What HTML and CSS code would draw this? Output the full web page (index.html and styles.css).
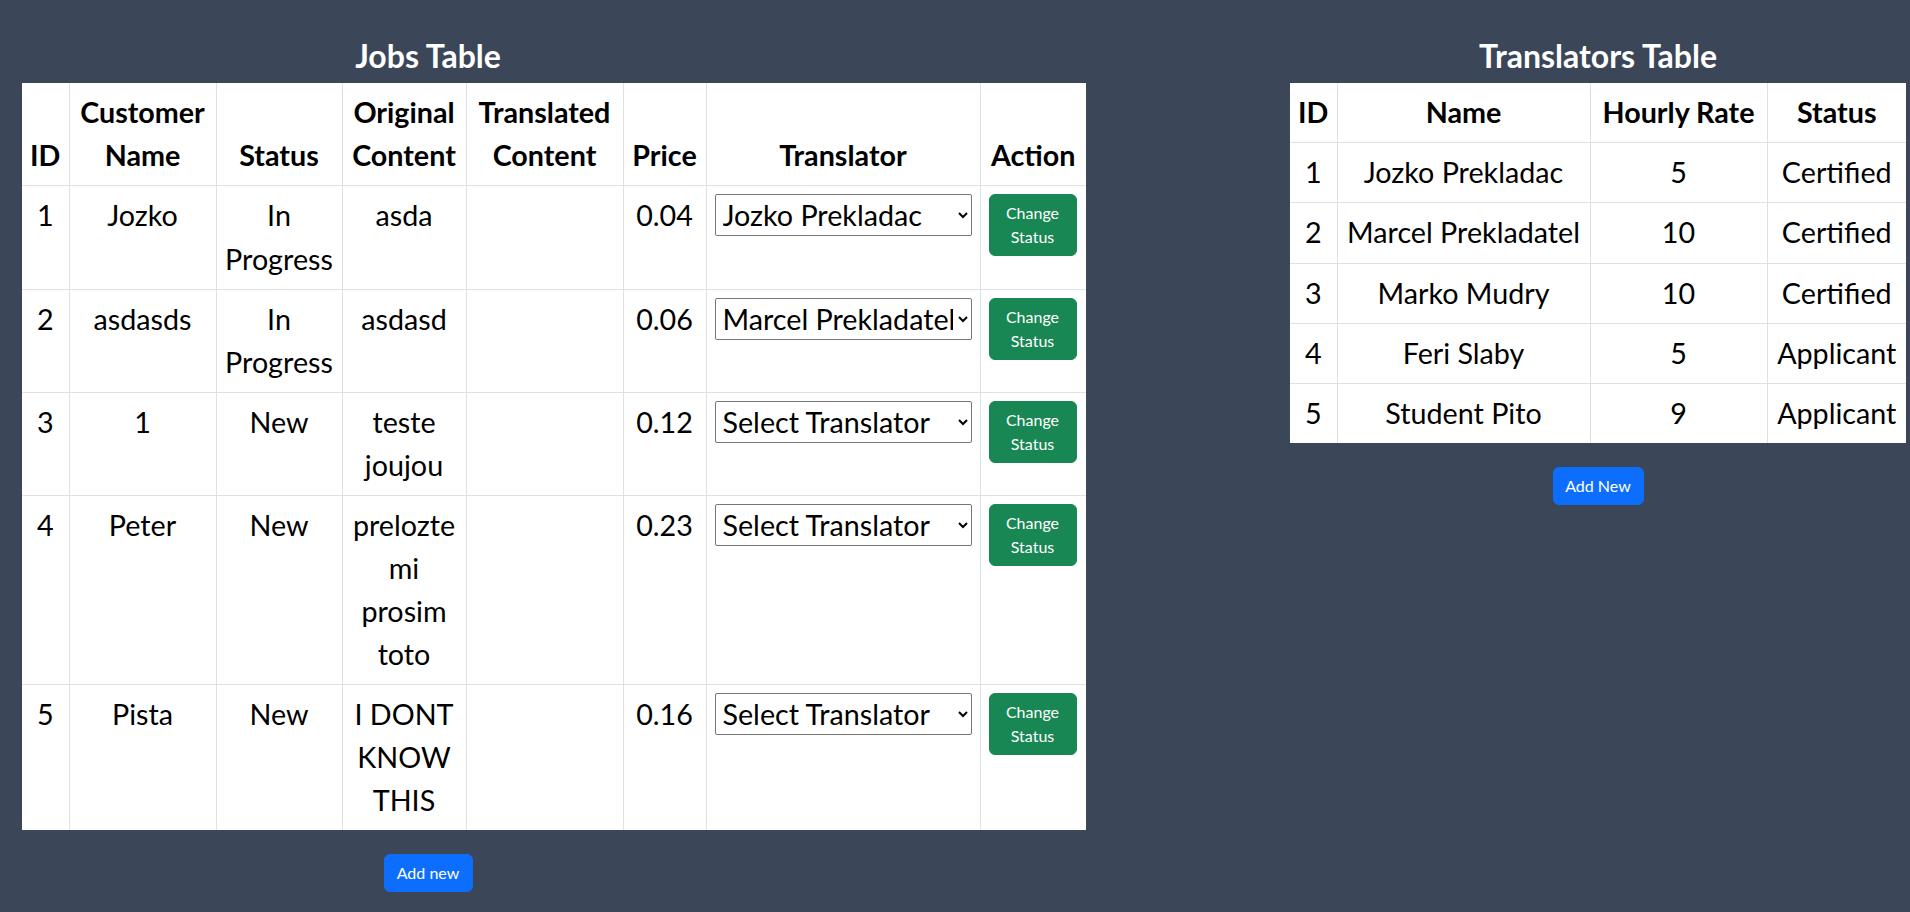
FILE: index.html
```html
<!DOCTYPE html>
<html lang="en">
<head>
<meta charset="utf-8">
<title>Jobs and Translators</title>
<link rel="stylesheet" href="styles.css">
</head>
<body>
<main class="page">
  <section class="panel panel-jobs">
    <h2 class="panel-title">Jobs Table</h2>
    <table class="data-table jobs-table">
      <colgroup>
        <col class="c-id"><col class="c-customer"><col class="c-status"><col class="c-original"><col class="c-translated"><col class="c-price"><col class="c-translator"><col class="c-action">
      </colgroup>
      <thead>
        <tr><th>ID</th><th>Customer Name</th><th>Status</th><th>Original Content</th><th>Translated Content</th><th>Price</th><th>Translator</th><th>Action</th></tr>
      </thead>
      <tbody>
        <tr>
          <td>1</td><td>Jozko</td><td>In Progress</td><td>asda</td><td></td><td>0.04</td>
          <td><select class="translator-select"><option>Select Translator</option><option selected>Jozko Prekladac</option><option>Marcel Prekladatel</option><option>Marko Mudry</option><option>Feri Slaby</option><option>Student Pito</option></select></td>
          <td><button class="btn btn-success">Change Status</button></td>
        </tr>
        <tr>
          <td>2</td><td>asdasds</td><td>In Progress</td><td>asdasd</td><td></td><td>0.06</td>
          <td><select class="translator-select"><option>Select Translator</option><option>Jozko Prekladac</option><option selected>Marcel Prekladatel</option><option>Marko Mudry</option><option>Feri Slaby</option><option>Student Pito</option></select></td>
          <td><button class="btn btn-success">Change Status</button></td>
        </tr>
        <tr>
          <td>3</td><td>1</td><td>New</td><td>teste joujou</td><td></td><td>0.12</td>
          <td><select class="translator-select"><option selected>Select Translator</option><option>Jozko Prekladac</option><option>Marcel Prekladatel</option><option>Marko Mudry</option><option>Feri Slaby</option><option>Student Pito</option></select></td>
          <td><button class="btn btn-success">Change Status</button></td>
        </tr>
        <tr>
          <td>4</td><td>Peter</td><td>New</td><td>prelozte mi prosim toto</td><td></td><td>0.23</td>
          <td><select class="translator-select"><option selected>Select Translator</option><option>Jozko Prekladac</option><option>Marcel Prekladatel</option><option>Marko Mudry</option><option>Feri Slaby</option><option>Student Pito</option></select></td>
          <td><button class="btn btn-success">Change Status</button></td>
        </tr>
        <tr>
          <td>5</td><td>Pista</td><td>New</td><td>I DONT KNOW THIS</td><td></td><td>0.16</td>
          <td><select class="translator-select"><option selected>Select Translator</option><option>Jozko Prekladac</option><option>Marcel Prekladatel</option><option>Marko Mudry</option><option>Feri Slaby</option><option>Student Pito</option></select></td>
          <td><button class="btn btn-success">Change Status</button></td>
        </tr>
      </tbody>
    </table>
    <button class="btn btn-primary add-btn">Add new</button>
  </section>

  <section class="panel panel-translators">
    <h2 class="panel-title">Translators Table</h2>
    <table class="data-table translators-table">
      <colgroup>
        <col class="t-id"><col class="t-name"><col class="t-rate"><col class="t-status">
      </colgroup>
      <thead>
        <tr><th>ID</th><th>Name</th><th>Hourly Rate</th><th>Status</th></tr>
      </thead>
      <tbody>
        <tr><td>1</td><td>Jozko Prekladac</td><td>5</td><td>Certified</td></tr>
        <tr><td>2</td><td>Marcel Prekladatel</td><td>10</td><td>Certified</td></tr>
        <tr><td>3</td><td>Marko Mudry</td><td>10</td><td>Certified</td></tr>
        <tr><td>4</td><td>Feri Slaby</td><td>5</td><td>Applicant</td></tr>
        <tr><td>5</td><td>Student Pito</td><td>9</td><td>Applicant</td></tr>
      </tbody>
    </table>
    <button class="btn btn-primary add-btn">Add New</button>
  </section>
</main>
</body>
</html>
```

FILE: styles.css
```css
* {
  box-sizing: border-box;
}

html, body {
  margin: 0;
  padding: 0;
}

body {
  background: #3b4659;
  font-family: Lato, "Liberation Sans", sans-serif;
  color: #000;
  min-height: 100vh;
}

.page {
  display: flex;
  justify-content: space-between;
  align-items: flex-start;
  padding: 37px 4px 0 22px;
}

.panel {
  display: flex;
  flex-direction: column;
  align-items: center;
}

.panel-jobs {
  width: 812px;
}

.panel-translators {
  width: 616px;
}

.panel-title {
  margin: 0 0 8px;
  font-size: 32px;
  line-height: 1.2;
  font-weight: 700;
  color: #fff;
}

.data-table {
  align-self: flex-start;
  border-collapse: collapse;
  table-layout: fixed;
  background: #fff;
  font-size: 28.7px;
  line-height: 1.5;
  text-align: center;
}

.data-table th,
.data-table td {
  border: 1px solid #dee2e6;
  padding: 8px;
  vertical-align: top;
}

.data-table th {
  font-weight: 700;
  vertical-align: bottom;
}

.data-table td:first-child,
.data-table th:first-child {
  border-left: 0;
}

.data-table td:last-child,
.data-table th:last-child {
  border-right: 0;
}

.data-table thead tr:first-child th {
  border-top: 0;
}

.data-table tbody tr:last-child td {
  border-bottom: 0;
}

.jobs-table {
  width: 1064px;
}

.c-id { width: 47px; }
.c-customer { width: 147px; }
.c-status { width: 126px; }
.c-original { width: 124px; }
.c-translated { width: 157px; }
.c-price { width: 83px; }
.c-translator { width: 274px; }
.c-action { width: 106px; }

.translators-table {
  width: 616px;
}

.translators-table th {
  white-space: nowrap;
}

.t-id { width: 47px; }
.t-name { width: 253px; }
.t-rate { width: 177px; }
.t-status { width: 139px; }

.translator-select {
  display: block;
  width: 100%;
  height: 42px;
  margin: 0;
  padding: 0 2px 0 3px;
  font: inherit;
  font-size: 28.7px;
  line-height: normal;
  color: #000;
  background: #fff;
  border: 1px solid #767676;
  border-radius: 2px;
}

.btn {
  display: inline-block;
  padding: 6px 12px;
  font-family: Lato, "Liberation Sans", sans-serif;
  font-size: 16px;
  line-height: 1.5;
  font-weight: 400;
  color: #fff;
  border: 1px solid transparent;
  border-radius: 6px;
  text-align: center;
  cursor: pointer;
}

.btn-success {
  display: block;
  background: #198754;
  border-color: #198754;
  width: 88px;
}

.btn-primary {
  background: #0d6efd;
  border-color: #0d6efd;
}

.add-btn {
  margin-top: 24px;
  height: 38px;
  padding: 6px 0;
  white-space: nowrap;
}

.panel-jobs .add-btn {
  width: 89px;
}

.panel-translators .add-btn {
  width: 91px;
}
```
